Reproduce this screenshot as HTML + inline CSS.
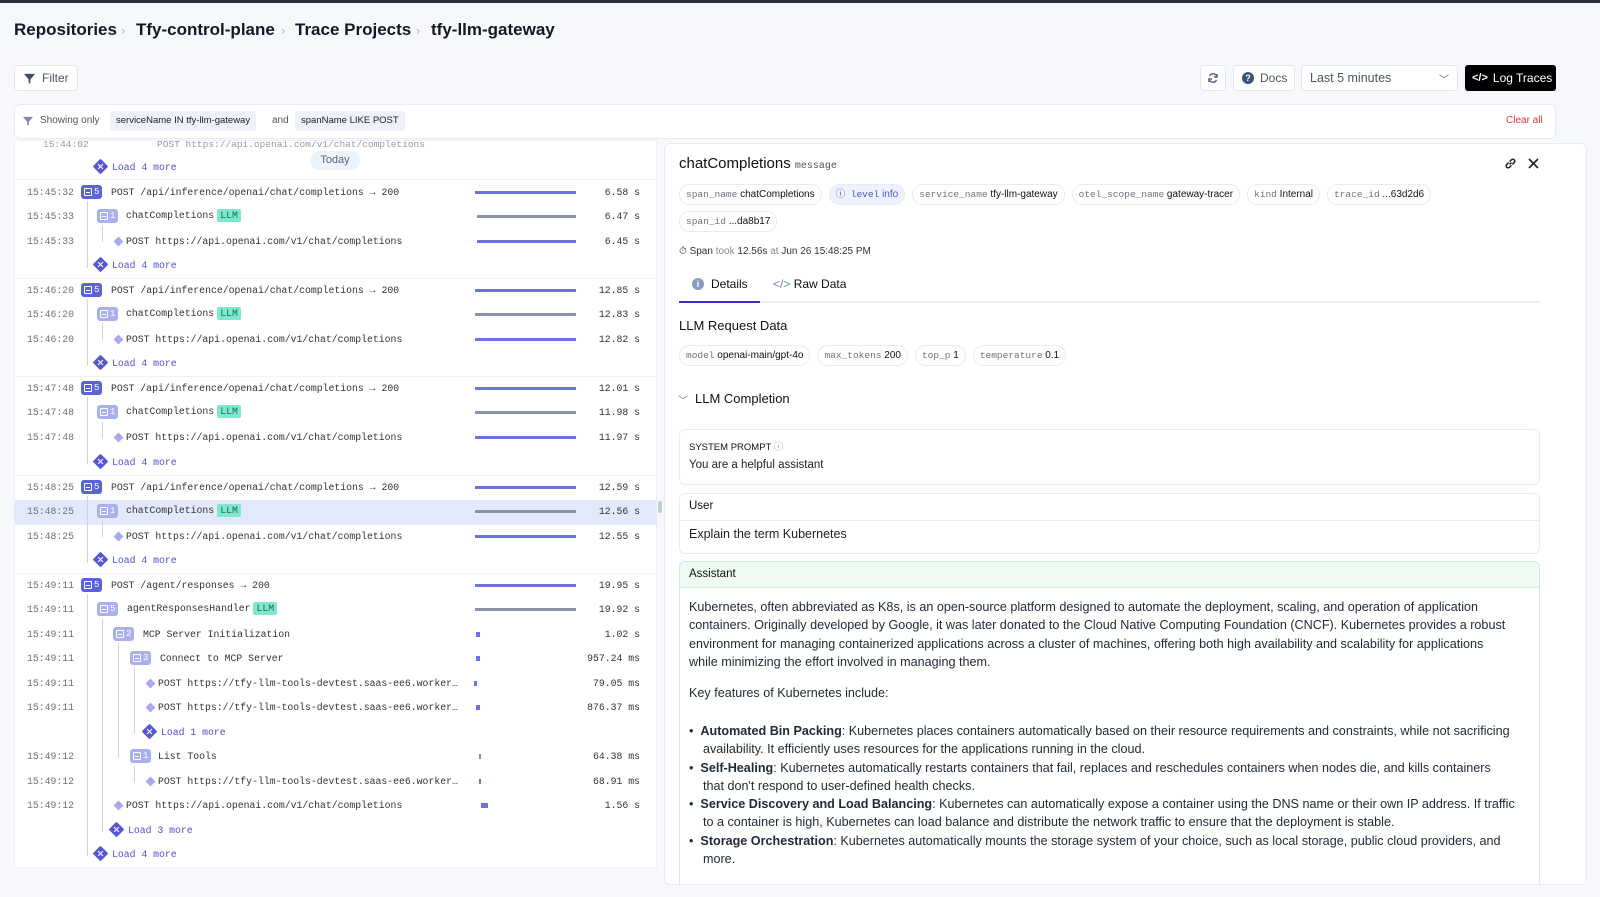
<!DOCTYPE html>
<html><head><meta charset="utf-8"><style>
*{box-sizing:border-box;margin:0;padding:0}
html{overflow:hidden;width:1600px;height:897px}
body{width:1600px;height:897px;overflow:hidden;background:#f6f8fc;font-family:"Liberation Sans",sans-serif;color:#111;position:relative;border-top:3px solid #2b2f3a}
.a{position:absolute}
.mono{font-family:"Liberation Mono",monospace}
.crumb{top:17px;font-size:17px;font-weight:bold;color:#111827}
.sep{top:20px;color:#bbb;font-size:13px}
.btn{background:#fff;border:1px solid #e3e7ef;border-radius:4px;height:26px;top:62px;font-size:12px;color:#4b5563;display:flex;align-items:center}
.row{position:absolute;left:0;width:650px;height:20px;font-size:9.8px;color:#333;white-space:nowrap}
.t{position:absolute;left:27px;color:#6b7280;top:4px}
.bd{position:absolute;top:2px;height:14px;border-radius:3px;color:#fff;font-size:9px;display:flex;align-items:center;padding:0 3px;gap:2px}
.bd i{display:inline-block;width:8px;height:8px;border:1px solid #fff;border-radius:1px;position:relative}
.bd i:after{content:"";position:absolute;left:1px;right:1px;top:3px;height:1px;background:#fff}
.b0{background:#5b64d6}.b1{background:#a9b0ee}
.tx{position:absolute;top:4px}
.llm{background:#7ee8cf;color:#1b6e5a;padding:1px 3px;border-radius:2px;margin-left:3px}
.dm{position:absolute;top:6px;width:7px;height:7px;background:#a6acec;transform:rotate(45deg)}
.ld{position:absolute;top:3px;width:11px;height:11px;background:#5558d0;transform:rotate(45deg);border-radius:1px}
.ld:after{content:"";position:absolute;left:2px;top:5px;width:7px;height:1px;background:#fff}
.ld:before{content:"";position:absolute;left:5px;top:2px;width:1px;height:7px;background:#fff}
.lt{position:absolute;top:4px;color:#4f52c8}
.bar{position:absolute;top:8px;height:3px;border-left:2px solid;border-right:2px solid}
.bp{background:#6c74e0;border-color:#6c74e0}.bg{background:#8a93a5;border-color:#8a93a5}
.du{position:absolute;left:540px;width:100px;text-align:right;top:4px;color:#333}
.vl{position:absolute;width:1px;background:#cfd3dc}
.hl{position:absolute;height:1px;background:#cfd3dc}
.chip{display:inline-block;border:1px solid #e8ebf2;border-radius:11px;padding:0 6px;height:21px;line-height:19px;font-size:10px;margin-right:7px;color:#111;background:#fff}
.chip .k{font-family:"Liberation Mono",monospace;color:#6b7280;font-size:9.5px}
.ast{font-size:12.6px;line-height:18.3px;color:#1f2937;white-space:nowrap}
</style></head><body>
<div class="a crumb" style="left:14px">Repositories</div>
<div class="a sep" style="left:121px">›</div>
<div class="a crumb" style="left:136px">Tfy-control-plane</div>
<div class="a sep" style="left:281px">›</div>
<div class="a crumb" style="left:295px">Trace Projects</div>
<div class="a sep" style="left:416px">›</div>
<div class="a crumb" style="left:431px">tfy-llm-gateway</div>

<div class="a btn" style="left:14px;width:64px;padding-left:9px;gap:7px"><svg width="11" height="11" viewBox="0 0 12 12"><path d="M0 1h12L7 7v5L5 10V7z" fill="#3b4a6b"/></svg>Filter</div>
<div class="a btn" style="left:1200px;width:26px;justify-content:center"><svg width="12" height="12" viewBox="0 0 12 12" fill="none" stroke="#52607a" stroke-width="1.4"><path d="M10 5A4 4 0 0 0 2.5 4M2 7a4 4 0 0 0 7.5 1"/><path d="M10 2v3H7M2 10V7h3"/></svg></div>
<div class="a btn" style="left:1233px;width:62px;padding-left:8px;gap:6px"><span style="width:12px;height:12px;border-radius:50%;background:#3d4f7c;color:#fff;font-size:9px;font-weight:bold;text-align:center;line-height:12px">?</span>Docs</div>
<div class="a btn" style="left:1301px;width:157px;padding-left:8px;font-size:12.5px">Last 5 minutes<span style="position:absolute;right:8px;top:5px;color:#666;font-size:10px">﹀</span></div>
<div class="a" style="left:1465px;top:62px;width:91px;height:26px;background:#000;border-radius:3px;color:#fff;font-size:12px;display:flex;align-items:center;padding-left:7px;gap:5px"><b style="font-size:11px">&lt;/&gt;</b>Log Traces</div>

<div class="a" style="left:14px;top:101px;width:1542px;height:35px;background:#fff;border:1px solid #e8ebf2;border-radius:6px"></div>
<svg class="a" style="left:23px;top:113px" width="10" height="10" viewBox="0 0 12 12"><path d="M0 1h12L7 7v5L5 10V7z" fill="#7b8bb0"/></svg>
<div class="a" style="left:40px;top:112px;font-size:10px;color:#555">Showing only</div>
<div class="a" style="left:110px;top:108px;height:20px;line-height:20px;padding:0 6px;background:#eef1f8;border-radius:3px;font-size:9.5px;color:#222">serviceName IN tfy-llm-gateway</div>
<div class="a" style="left:272px;top:112px;font-size:10px;color:#555">and</div>
<div class="a" style="left:295px;top:108px;height:20px;line-height:20px;padding:0 6px;background:#eef1f8;border-radius:3px;font-size:9.5px;color:#222">spanName LIKE POST</div>
<div class="a" style="left:1506px;top:112px;font-size:10px;color:#dc3b3b">Clear all</div>

<div class="a" style="left:14px;top:137px;width:643px;height:728px;background:#fff;border:1px solid #eef0f5;overflow:hidden"></div>
<div class="a" style="left:14px;top:497px;width:643px;height:25px;background:#e4e8fb"></div>
<div class="a" style="left:658px;top:498px;width:4px;height:12px;background:#c5cad6;border-radius:2px"></div>
<div class="hl" style="left:14px;top:176px;width:643px;background:#eef0f5"></div>
<div class="hl" style="left:14px;top:275px;width:643px;background:#eef0f5"></div>
<div class="hl" style="left:14px;top:373px;width:643px;background:#eef0f5"></div>
<div class="hl" style="left:14px;top:472px;width:643px;background:#eef0f5"></div>
<div class="hl" style="left:14px;top:570px;width:643px;background:#eef0f5"></div>
<div class="a mono" style="left:43px;top:136px;font-size:9.5px;color:#999;white-space:nowrap">15:44:02&nbsp;&nbsp;&nbsp;&nbsp;&nbsp;&nbsp;&nbsp;&nbsp;&nbsp;&nbsp;&nbsp;&nbsp;POST https://api.openai.com/v1/chat/completions</div>
<div class="a" style="left:310px;top:148px;width:50px;height:19px;border-radius:10px;background:#eef2f9;color:#5b6b8a;font-size:11px;text-align:center;line-height:19px">Today</div>

<div class="mono">
<div class="vl" style="left:87px;top:198px;height:67px"></div>
<div class="vl" style="left:87px;top:296px;height:67px"></div>
<div class="vl" style="left:87px;top:394px;height:67px"></div>
<div class="vl" style="left:87px;top:493px;height:67px"></div>
<div class="vl" style="left:87px;top:591px;height:262px"></div>
<div class="vl" style="left:102px;top:222px;height:17px"></div>
<div class="vl" style="left:102px;top:320px;height:17px"></div>
<div class="vl" style="left:102px;top:419px;height:17px"></div>
<div class="vl" style="left:102px;top:517px;height:17px"></div>
<div class="vl" style="left:102px;top:616px;height:213px"></div>
<div class="vl" style="left:118px;top:640px;height:115px"></div>
<div class="vl" style="left:134px;top:665px;height:66px"></div>
<div class="vl" style="left:134px;top:763px;height:17px"></div>

<div class="row" style="top:155px"><div class="ld" style="left:95px"></div><div class="lt" style="left:112px">Load 4 more</div></div>

<div class="row" style="top:180px"><div class="t">15:45:32</div><div class="bd b0" style="left:81px"><i></i>5</div><div class="tx" style="left:111px">POST /api/inference/openai/chat/completions → 200</div><div class="bar bp" style="left:475px;width:101px"></div><div class="du">6.58 s</div></div>
<div class="row" style="top:204px"><div class="t">15:45:33</div><div class="bd b1" style="left:97px"><i></i>1</div><div class="tx" style="left:126px;top:3px">chatCompletions<span class="llm">LLM</span></div><div class="bar bg" style="left:477px;width:99px"></div><div class="du">6.47 s</div></div>
<div class="row" style="top:229px"><div class="t">15:45:33</div><div class="dm" style="left:115px"></div><div class="tx" style="left:126px">POST https://api.openai.com/v1/chat/completions</div><div class="bar bp" style="left:477px;width:99px"></div><div class="du">6.45 s</div></div>
<div class="row" style="top:253px"><div class="ld" style="left:95px"></div><div class="lt" style="left:112px">Load 4 more</div></div>

<div class="row" style="top:278px"><div class="t">15:46:20</div><div class="bd b0" style="left:81px"><i></i>5</div><div class="tx" style="left:111px">POST /api/inference/openai/chat/completions → 200</div><div class="bar bp" style="left:475px;width:101px"></div><div class="du">12.85 s</div></div>
<div class="row" style="top:302px"><div class="t">15:46:20</div><div class="bd b1" style="left:97px"><i></i>1</div><div class="tx" style="left:126px;top:3px">chatCompletions<span class="llm">LLM</span></div><div class="bar bg" style="left:475px;width:101px"></div><div class="du">12.83 s</div></div>
<div class="row" style="top:327px"><div class="t">15:46:20</div><div class="dm" style="left:115px"></div><div class="tx" style="left:126px">POST https://api.openai.com/v1/chat/completions</div><div class="bar bp" style="left:475px;width:101px"></div><div class="du">12.82 s</div></div>
<div class="row" style="top:351px"><div class="ld" style="left:95px"></div><div class="lt" style="left:112px">Load 4 more</div></div>

<div class="row" style="top:376px"><div class="t">15:47:48</div><div class="bd b0" style="left:81px"><i></i>5</div><div class="tx" style="left:111px">POST /api/inference/openai/chat/completions → 200</div><div class="bar bp" style="left:475px;width:101px"></div><div class="du">12.01 s</div></div>
<div class="row" style="top:400px"><div class="t">15:47:48</div><div class="bd b1" style="left:97px"><i></i>1</div><div class="tx" style="left:126px;top:3px">chatCompletions<span class="llm">LLM</span></div><div class="bar bg" style="left:475px;width:101px"></div><div class="du">11.98 s</div></div>
<div class="row" style="top:425px"><div class="t">15:47:48</div><div class="dm" style="left:115px"></div><div class="tx" style="left:126px">POST https://api.openai.com/v1/chat/completions</div><div class="bar bp" style="left:475px;width:101px"></div><div class="du">11.97 s</div></div>
<div class="row" style="top:450px"><div class="ld" style="left:95px"></div><div class="lt" style="left:112px">Load 4 more</div></div>

<div class="row" style="top:475px"><div class="t">15:48:25</div><div class="bd b0" style="left:81px"><i></i>5</div><div class="tx" style="left:111px">POST /api/inference/openai/chat/completions → 200</div><div class="bar bp" style="left:475px;width:101px"></div><div class="du">12.59 s</div></div>
<div class="row" style="top:499px"><div class="t">15:48:25</div><div class="bd b1" style="left:97px"><i></i>1</div><div class="tx" style="left:126px;top:3px">chatCompletions<span class="llm">LLM</span></div><div class="bar bg" style="left:475px;width:101px"></div><div class="du">12.56 s</div></div>
<div class="row" style="top:524px"><div class="t">15:48:25</div><div class="dm" style="left:115px"></div><div class="tx" style="left:126px">POST https://api.openai.com/v1/chat/completions</div><div class="bar bp" style="left:475px;width:101px"></div><div class="du">12.55 s</div></div>
<div class="row" style="top:548px"><div class="ld" style="left:95px"></div><div class="lt" style="left:112px">Load 4 more</div></div>

<div class="row" style="top:573px"><div class="t">15:49:11</div><div class="bd b0" style="left:81px"><i></i>5</div><div class="tx" style="left:111px">POST /agent/responses → 200</div><div class="bar bp" style="left:475px;width:101px"></div><div class="du">19.95 s</div></div>
<div class="row" style="top:597px"><div class="t">15:49:11</div><div class="bd b1" style="left:97px"><i></i>5</div><div class="tx" style="left:127px;top:3px">agentResponsesHandler<span class="llm">LLM</span></div><div class="bar bg" style="left:475px;width:101px"></div><div class="du">19.92 s</div></div>
<div class="row" style="top:622px"><div class="t">15:49:11</div><div class="bd b1" style="left:113px"><i></i>2</div><div class="tx" style="left:143px">MCP Server Initialization</div><div class="bar bp" style="left:476px;width:4px;height:5px;top:7px"></div><div class="du">1.02 s</div></div>
<div class="row" style="top:646px"><div class="t">15:49:11</div><div class="bd b1" style="left:130px"><i></i>3</div><div class="tx" style="left:160px">Connect to MCP Server</div><div class="bar bp" style="left:476px;width:4px;height:5px;top:7px"></div><div class="du">957.24 ms</div></div>
<div class="row" style="top:671px"><div class="t">15:49:11</div><div class="dm" style="left:147px"></div><div class="tx" style="left:158px">POST https://tfy-llm-tools-devtest.saas-ee6.worker…</div><div class="bar bp" style="left:474px;width:3px;height:5px;top:7px;border:0"></div><div class="du">79.05 ms</div></div>
<div class="row" style="top:695px"><div class="t">15:49:11</div><div class="dm" style="left:147px"></div><div class="tx" style="left:158px">POST https://tfy-llm-tools-devtest.saas-ee6.worker…</div><div class="bar bp" style="left:476px;width:4px;height:5px;top:7px"></div><div class="du">876.37 ms</div></div>
<div class="row" style="top:720px"><div class="ld" style="left:144px"></div><div class="lt" style="left:161px">Load 1 more</div></div>
<div class="row" style="top:744px"><div class="t">15:49:12</div><div class="bd b1" style="left:130px"><i></i>1</div><div class="tx" style="left:158px">List Tools</div><div class="bar bg" style="left:479px;width:2px;height:5px;top:7px;border:0"></div><div class="du">64.38 ms</div></div>
<div class="row" style="top:769px"><div class="t">15:49:12</div><div class="dm" style="left:147px"></div><div class="tx" style="left:158px">POST https://tfy-llm-tools-devtest.saas-ee6.worker…</div><div class="bar bp" style="left:479px;width:2px;height:5px;top:7px;border:0"></div><div class="du">68.91 ms</div></div>
<div class="row" style="top:793px"><div class="t">15:49:12</div><div class="dm" style="left:115px"></div><div class="tx" style="left:126px">POST https://api.openai.com/v1/chat/completions</div><div class="bar bp" style="left:481px;width:7px;height:5px;top:7px"></div><div class="du">1.56 s</div></div>
<div class="row" style="top:818px"><div class="ld" style="left:111px"></div><div class="lt" style="left:128px">Load 3 more</div></div>
<div class="row" style="top:842px"><div class="ld" style="left:95px"></div><div class="lt" style="left:112px">Load 4 more</div></div>
</div>

<div class="a" style="left:664px;top:140px;width:923px;height:742px;background:#fff;border:1px solid #e8ebf2;border-radius:6px"></div>
<div class="a" style="left:679px;top:152px;font-size:15px;color:#111;white-space:nowrap">chatCompletions <span class="mono" style="font-size:10px;color:#555">message</span></div>
<svg class="a" style="left:1504px;top:154px" width="13" height="13" viewBox="0 0 14 14" fill="none" stroke="#222" stroke-width="1.6"><path d="M6 8l2-2M5 6L3 8a2 2 0 0 0 3 3l2-2M9 8l2-2a2 2 0 0 0-3-3L6 5"/></svg>
<svg class="a" style="left:1528px;top:155px" width="11" height="11" viewBox="0 0 11 11" stroke="#222" stroke-width="1.6"><path d="M1 1l9 9M10 1l-9 9"/></svg>
<div class="a" style="left:679px;top:181px;width:800px">
<span class="chip"><span class="k">span_name</span> chatCompletions</span><span class="chip" style="background:#eef1fc;color:#4d55c9"><span class="k" style="color:#4d55c9">ⓘ level</span> info</span><span class="chip"><span class="k">service_name</span> tfy-llm-gateway</span><span class="chip"><span class="k">otel_scope_name</span> gateway-tracer</span><span class="chip"><span class="k">kind</span> Internal</span><span class="chip"><span class="k">trace_id</span> ...63d2d6</span>
</div>
<div class="a" style="left:679px;top:208px"><span class="chip"><span class="k">span_id</span> ...da8b17</span></div>
<div class="a" style="left:679px;top:243px;font-size:10px;color:#333;white-space:nowrap">⏱ Span <span style="color:#888">took</span> 12.56s <span style="color:#888">at</span> Jun 26 15:48:25 PM</div>
<div class="a" style="left:692px;top:275px;width:12px;height:12px;border-radius:50%;background:#8c9ac0;color:#fff;font-size:9px;text-align:center;line-height:12px;font-weight:bold">i</div>
<div class="a" style="left:711px;top:274px;font-size:12px">Details</div>
<div class="a" style="left:773px;top:274px;font-size:12px;color:#111"><span style="color:#6b7fb8">&lt;/&gt;</span> Raw Data</div>
<div class="a" style="left:679px;top:298px;width:861px;height:2px;background:#e9ebf3"></div>
<div class="a" style="left:679px;top:298px;width:81px;height:2px;background:#3b2fc9"></div>

<div class="a" style="left:679px;top:315px;font-size:13px">LLM Request Data</div>
<div class="a" style="left:679px;top:342px;white-space:nowrap"><span class="chip"><span class="k">model</span> openai-main/gpt-4o</span><span class="chip"><span class="k">max_tokens</span> 200</span><span class="chip"><span class="k">top_p</span> 1</span><span class="chip"><span class="k">temperature</span> 0.1</span></div>
<div class="a" style="left:678px;top:389px;font-size:10px;color:#777">﹀</div>
<div class="a" style="left:695px;top:388px;font-size:13px">LLM Completion</div>

<div class="a" style="left:679px;top:426px;width:861px;height:56px;border:1px solid #e8ebf2;border-radius:6px"></div>
<div class="a" style="left:689px;top:436px;font-size:9.5px;color:#111">SYSTEM PROMPT <span style="color:#8aa0d0">ⓘ</span></div>
<div class="a" style="left:689px;top:456px;font-size:11.5px;color:#222">You are a helpful assistant</div>
<div class="a" style="left:679px;top:490px;width:861px;height:61px;border:1px solid #e8ebf2;border-radius:6px"></div>
<div class="a" style="left:679px;top:517px;width:861px;height:1px;background:#e8ebf2"></div>
<div class="a" style="left:689px;top:497px;font-size:11.5px">User</div>
<div class="a" style="left:689px;top:524px;font-size:12.5px;color:#222">Explain the term Kubernetes</div>
<div class="a" style="left:679px;top:558px;width:861px;height:330px;border:1px solid #cfeedd;border-radius:6px"></div>
<div class="a" style="left:679px;top:558px;width:861px;height:27px;background:#eefaf2;border:1px solid #cfeedd;border-radius:6px 6px 0 0"></div>
<div class="a" style="left:689px;top:565px;font-size:11.5px">Assistant</div>
<div class="a ast" style="left:689px;top:595px">Kubernetes, often abbreviated as K8s, is an open-source platform designed to automate the deployment, scaling, and operation of application<br>containers. Originally developed by Google, it was later donated to the Cloud Native Computing Foundation (CNCF). Kubernetes provides a robust<br>environment for managing containerized applications across a cluster of machines, offering both high availability and scalability for applications<br>while minimizing the effort involved in managing them.</div>
<div class="a ast" style="left:689px;top:681px">Key features of Kubernetes include:</div>
<div class="a ast" style="left:689px;top:719px">• &nbsp;<b>Automated Bin Packing</b>: Kubernetes places containers automatically based on their resource requirements and constraints, while not sacrificing<br>&nbsp;&nbsp;&nbsp;&nbsp;availability. It efficiently uses resources for the applications running in the cloud.<br>• &nbsp;<b>Self-Healing</b>: Kubernetes automatically restarts containers that fail, replaces and reschedules containers when nodes die, and kills containers<br>&nbsp;&nbsp;&nbsp;&nbsp;that don't respond to user-defined health checks.<br>• &nbsp;<b>Service Discovery and Load Balancing</b>: Kubernetes can automatically expose a container using the DNS name or their own IP address. If traffic<br>&nbsp;&nbsp;&nbsp;&nbsp;to a container is high, Kubernetes can load balance and distribute the network traffic to ensure that the deployment is stable.<br>• &nbsp;<b>Storage Orchestration</b>: Kubernetes automatically mounts the storage system of your choice, such as local storage, public cloud providers, and<br>&nbsp;&nbsp;&nbsp;&nbsp;more.</div>
<div class="a" style="left:0;top:882px;width:1600px;height:15px;background:#f6f8fc"></div>
</body></html>
